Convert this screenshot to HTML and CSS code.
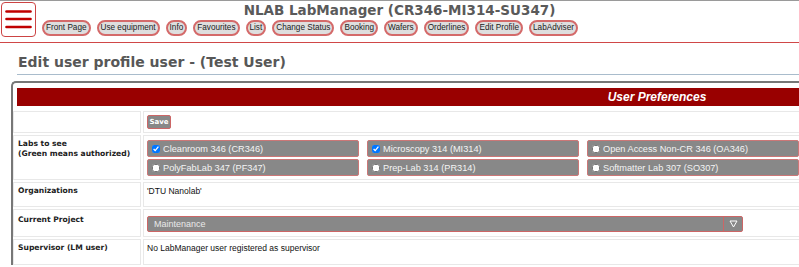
FILE: index.html
```html
<!DOCTYPE html>
<html lang="en">
<head>
    <meta charset="UTF-8">
    <meta name="viewport" content="width=device-width, initial-scale=1.0">
    <title>NLAB LabManager - Edit Profile</title>
    <link rel="stylesheet" href="styles.css">
</head>
<body>

    <!-- Top bar with menu and navigation -->
    <header class="topbar">
        <button class="menu-btn" type="button">
            <svg width="27" height="19" viewBox="0 0 27 19">
                <line x1="1.5" y1="1.5" x2="25.5" y2="1.5" />
                <line x1="1.5" y1="9" x2="25.5" y2="9" />
                <line x1="1.5" y1="17" x2="25.5" y2="17" />
            </svg>
        </button>
        <div class="topbar-main">
            <div class="app-title">NLAB LabManager (CR346-MI314-SU347)</div>
            <nav class="main-nav">
                <a href="#">Front Page</a>
                <a href="#">Use equipment</a>
                <a href="#">Info</a>
                <a href="#">Favourites</a>
                <a href="#">List</a>
                <a href="#">Change Status</a>
                <a href="#">Booking</a>
                <a href="#">Wafers</a>
                <a href="#">Orderlines</a>
                <a href="#">Edit Profile</a>
                <a href="#">LabAdviser</a>
            </nav>
        </div>
    </header>

    <main class="content">
        <h2 class="page-title">Edit user profile user - (Test User)</h2>

        <div class="panel">
            <div class="panel-head">User Preferences</div>

            <div class="form-row row-save">
                <div class="form-label"></div>
                <div class="form-value">
                    <button type="button" class="save-btn">Save</button>
                </div>
            </div>

            <div class="form-row row-labs">
                <div class="form-label">Labs to see<br>(Green means authorized)</div>
                <div class="form-value">
                    <div class="labs-grid">
                        <label class="lab-chip"><input type="checkbox" checked>Cleanroom 346 (CR346)</label>
                        <label class="lab-chip"><input type="checkbox" checked>Microscopy 314 (MI314)</label>
                        <label class="lab-chip"><input type="checkbox">Open Access Non-CR 346 (OA346)</label>
                        <label class="lab-chip"><input type="checkbox">PolyFabLab 347 (PF347)</label>
                        <label class="lab-chip"><input type="checkbox">Prep-Lab 314 (PR314)</label>
                        <label class="lab-chip"><input type="checkbox">Softmatter Lab 307 (SO307)</label>
                    </div>
                </div>
            </div>

            <div class="form-row row-org">
                <div class="form-label">Organizations</div>
                <div class="form-value">'DTU Nanolab'</div>
            </div>

            <div class="form-row row-project">
                <div class="form-label">Current Project</div>
                <div class="form-value">
                    <div class="select-box">
                        <span class="select-text">Maintenance</span>
                        <span class="select-arrow">
                            <svg width="9" height="8" viewBox="0 0 9 8">
                                <polygon points="1,1 8,1 4.5,7" />
                            </svg>
                        </span>
                    </div>
                </div>
            </div>

            <div class="form-row row-super">
                <div class="form-label">Supervisor (LM user)</div>
                <div class="form-value">No LabManager user registered as supervisor</div>
            </div>
        </div>
    </main>

</body>
</html>
```

FILE: styles.css
```css
html {
    overflow: hidden;
}

body {
    margin: 0;
    padding: 0;
    background-color: #fff;
    font-family: "Liberation Sans", Arial, sans-serif;
    color: #111;
}

/* top bar */
.topbar {
    display: flex;
    border-top: 1px solid #9a9a9a;
    border-bottom: 1px solid #d04848;
    height: 41px;
    box-sizing: content-box;
}

.menu-btn {
    display: flex;
    align-items: center;
    justify-content: center;
    width: 35px;
    height: 35px;
    margin: 1px 0 0 1px;
    padding: 0;
    background-color: #fff;
    border: 1px solid #c44;
    border-radius: 4px;
    cursor: pointer;
}

.menu-btn svg line {
    stroke: #c00000;
    stroke-width: 2.6;
    stroke-linecap: round;
}

.topbar-main {
    flex: 1;
    padding-right: 36px;
}

.app-title {
    margin-top: 1px;
    font-family: "DejaVu Sans", Verdana, sans-serif;
    font-weight: bold;
    font-size: 13.5px;
    line-height: 16px;
    color: #5a5a5a;
    text-align: center;
}

.main-nav {
    display: flex;
    gap: 6px;
    margin: 2px 0 0 6px;
}

.main-nav a {
    display: block;
    height: 12px;
    padding: 0 2px;
    font-size: 8.2px;
    line-height: 12px;
    color: #222;
    text-decoration: none;
    background-color: #dedede;
    border: 2px solid #d46a6a;
    border-radius: 8px;
}

/* page heading */
.page-title {
    margin: 11px 0 0 17px;
    padding: 0 0 3px 1px;
    font-family: "DejaVu Sans", Verdana, sans-serif;
    font-size: 14px;
    line-height: 17px;
    color: #575757;
    border-bottom: 1px solid #a9bccc;
}

/* preferences panel */
.panel {
    width: 1300px;
    margin: 6px 0 0 11px;
    border: 2px solid #777;
    border-right: none;
    border-bottom: none;
    border-radius: 5px 0 0 0;
    padding-top: 5px;
}

.panel-head {
    width: 1280px;
    height: 18px;
    margin: 0 0 5px 4px;
    background-color: #990000;
    color: #fff;
    font-weight: bold;
    font-style: italic;
    font-size: 12px;
    line-height: 18px;
    text-align: center;
}

.form-row {
    display: grid;
    grid-template-columns: 128px 1fr;
    gap: 2px;
    margin-bottom: 2px;
}

.form-label,
.form-value {
    border: 1px solid #e8e8e8;
    box-sizing: border-box;
}

.form-label {
    padding: 3px 4px;
    font-family: "DejaVu Sans", Verdana, sans-serif;
    font-weight: bold;
    font-size: 7.6px;
    line-height: 10px;
    color: #222;
}

.form-value {
    padding: 3px;
    font-size: 8.5px;
    line-height: 10px;
}

.row-save { height: 22px; }
.row-labs { height: 45px; }
.row-org { height: 25px; }
.row-project { height: 28px; }
.row-super { height: 26px; }

.row-project .form-label {
    padding-top: 5px;
}

.save-btn {
    display: block;
    width: 24px;
    height: 14px;
    padding: 0;
    font-family: "DejaVu Sans", Verdana, sans-serif;
    font-weight: bold;
    font-size: 7px;
    color: #fff;
    background-color: #888;
    border: 1px solid #c66;
    border-radius: 2px;
}

.labs-grid {
    display: grid;
    grid-template-columns: repeat(3, 212px);
    column-gap: 8px;
    row-gap: 2px;
    margin-top: 1px;
}

.lab-chip {
    display: flex;
    align-items: center;
    height: 17px;
    box-sizing: border-box;
    background-color: #888;
    border: 1px solid #c77;
    border-radius: 2px;
    color: #f4f4f4;
    font-size: 9.2px;
    white-space: nowrap;
}

.lab-chip input {
    width: 8px;
    height: 8px;
    margin: 0 3px 0 4px;
}

.select-box {
    display: flex;
    align-items: center;
    width: 596px;
    height: 16px;
    margin-top: 3px;
    box-sizing: border-box;
    background-color: #888;
    border: 1px solid #c66;
    border-radius: 2px;
}

.select-text {
    flex: 1;
    padding-left: 6px;
    font-size: 9px;
    color: #e8e8e8;
}

.select-arrow {
    display: flex;
    align-items: center;
    justify-content: center;
    width: 18px;
    height: 100%;
    border-left: 1px solid #c66;
}

.select-arrow polygon {
    fill: none;
    stroke: #fff;
    stroke-width: 1;
}
```
